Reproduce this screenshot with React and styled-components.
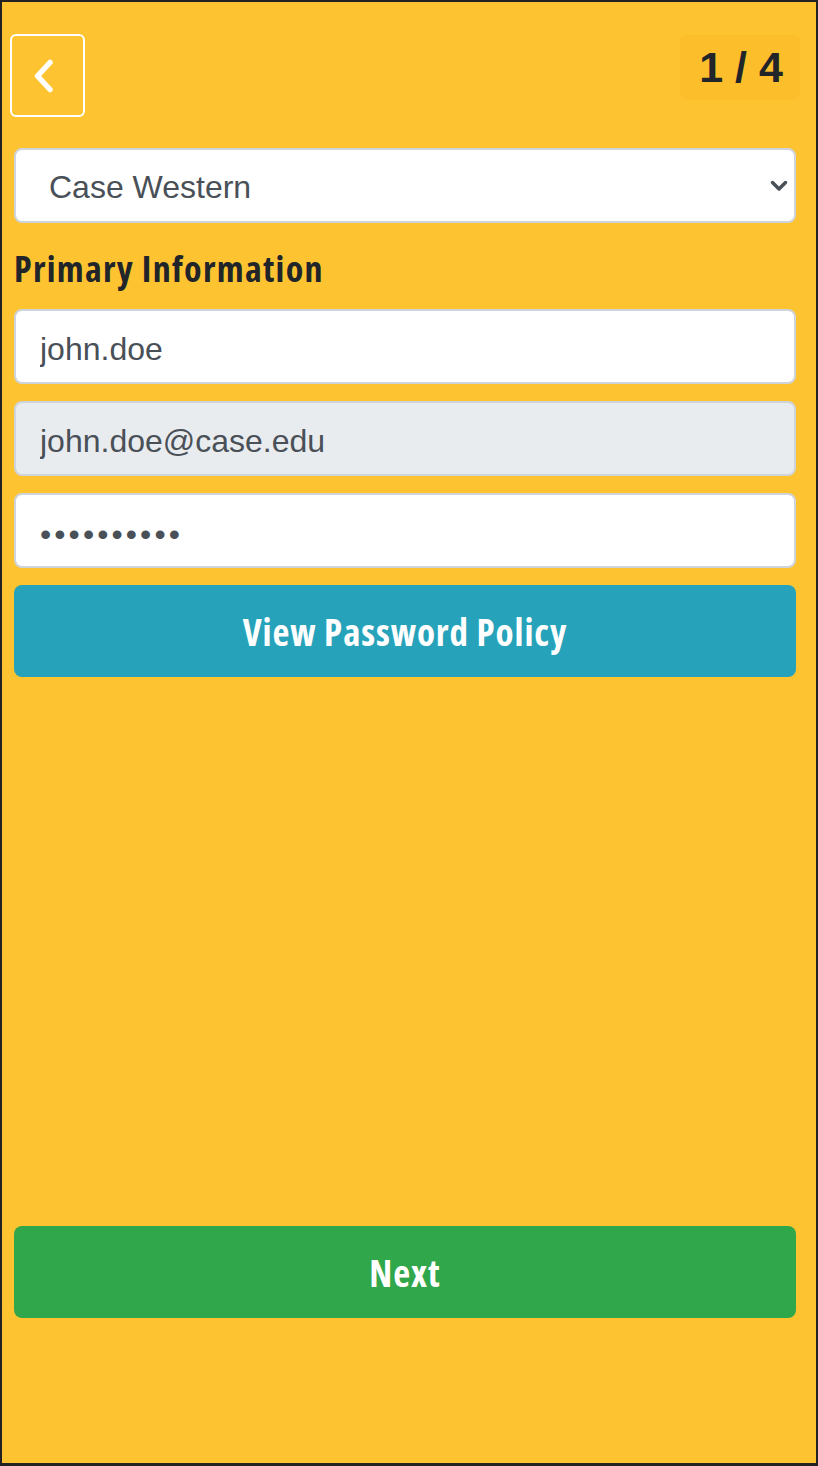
import styled, { createGlobalStyle } from "styled-components";

const yellow = "#fec331";
const text = "#495057";
const dark = "#212529";

const Global = createGlobalStyle`
	html, body {
		margin: 0;
		padding: 0;
		background: #222;
	}
	* {
		box-sizing: border-box;
	}
`;

const Frame = styled.div`
	width: 818px;
	height: 1466px;
	background: ${yellow};
	border: 2px solid #222;
	border-bottom-width: 3px;
	display: flex;
	flex-direction: column;
	font-family: "Liberation Sans", Arial, sans-serif;
`;

const Header = styled.header`
	display: flex;
	justify-content: space-between;
	align-items: flex-start;
	padding: 32px 16px 0 8px;
`;

const BackButton = styled.button`
	width: 75px;
	height: 83px;
	border: 2px solid #fff;
	border-radius: 6px;
	background: transparent;
	display: flex;
	align-items: center;
	justify-content: center;
	padding: 0 8px 0 0;
	cursor: pointer;
`;

const Counter = styled.div`
	margin-top: 1px;
	width: 120px;
	height: 65px;
	border-radius: 6px;
	background: #fcbe2b;
	color: ${dark};
	font-weight: 700;
	font-size: 43px;
	line-height: 65px;
	text-align: center;
	padding-left: 2px;
`;

const Form = styled.main`
	flex: 1;
	display: flex;
	flex-direction: column;
	padding: 31px 20px 0 12px;
`;

const SelectWrap = styled.div`
	position: relative;
`;

const Select = styled.select`
	appearance: none;
	width: 100%;
	height: 75px;
	border: 2px solid #ced4da;
	border-radius: 8px;
	background: #fff;
	color: ${text};
	font-family: "Liberation Sans", Arial, sans-serif;
	font-size: 32px;
	padding: 2px 40px 0 33px;
	outline: none;
`;

const Caret = styled.svg`
	position: absolute;
	right: 8px;
	top: 32px;
	pointer-events: none;
`;

const Heading = styled.h2`
	margin: 22px 0 16px;
	font-family: "Open Sans", sans-serif;
	font-stretch: 75%;
	font-weight: 700;
	font-size: 36px;
	letter-spacing: 1.3px;
	line-height: 48px;
	color: ${dark};
`;

const Fields = styled.div`
	display: flex;
	flex-direction: column;
	gap: 17px;
`;

const Input = styled.input`
	width: 100%;
	height: 75px;
	border: 2px solid #ced4da;
	border-radius: 8px;
	background: ${(p) => (p.$disabled ? "#e9ecef" : "#fff")};
	color: ${text};
	font-family: "Liberation Sans", Arial, sans-serif;
	font-size: 32px;
	padding: ${(p) => (p.type === "password" ? "8px" : "5px")} 24px 0;
	letter-spacing: ${(p) => (p.type === "password" ? "3.1px" : "normal")};
	outline: none;
`;

const ActionButton = styled.button`
	width: 100%;
	height: 92px;
	border: none;
	border-radius: 8px;
	background: ${(p) => p.$color};
	color: #fff;
	font-family: "Open Sans", sans-serif;
	font-stretch: 75%;
	font-weight: 700;
	font-size: 37px;
	letter-spacing: 0.9px;
	cursor: pointer;
`;

const Bottom = styled.div`
	padding: 0 20px 145px 12px;
`;

export default function App() {
	return (
		<>
			<Global />
			<Frame>
				<Header>
					<BackButton aria-label="Back">
						<svg width="22" height="34" viewBox="0 0 22 34">
							<polyline
								points="17,3.5 4.5,17 17,30.5"
								fill="none"
								stroke="#fff"
								strokeWidth="5.5"
								strokeLinecap="round"
								strokeLinejoin="round"
							/>
						</svg>
					</BackButton>
					<Counter>1 / 4</Counter>
				</Header>

				<Form>
					<SelectWrap>
						<Select defaultValue="case">
							<option value="case">Case Western</option>
						</Select>
						<Caret width="18" height="12" viewBox="0 0 18 12">
							<polyline
								points="2.5,2.5 9,9 15.5,2.5"
								fill="none"
								stroke={text}
								strokeWidth="3.5"
								strokeLinecap="round"
								strokeLinejoin="round"
							/>
						</Caret>
					</SelectWrap>

					<Heading>Primary Information</Heading>

					<Fields>
						<Input readOnly value="john.doe" />
						<Input readOnly $disabled value="john.doe@case.edu" />
						<Input readOnly type="password" value="abcdefghij" />
						<ActionButton $color="#26a3ba">View Password Policy</ActionButton>
					</Fields>
				</Form>

				<Bottom>
					<ActionButton $color="#30a74a">Next</ActionButton>
				</Bottom>
			</Frame>
		</>
	);
}
